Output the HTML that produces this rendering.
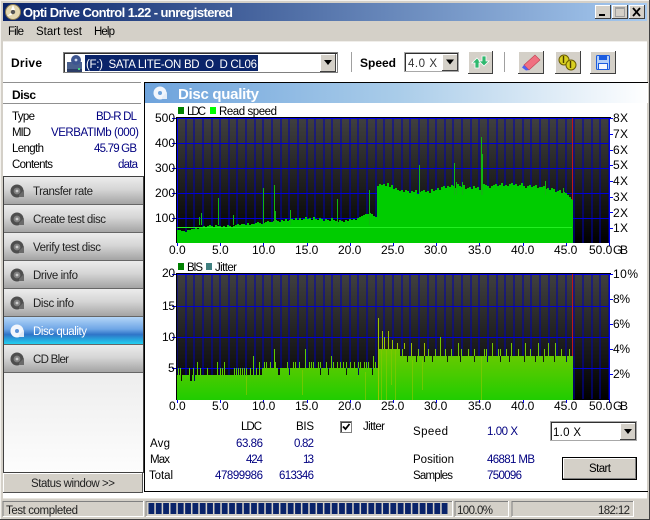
<!DOCTYPE html>
<html><head><meta charset="utf-8"><title>Opti Drive Control</title>
<style>
html,body{margin:0;padding:0;background:#fff}
svg{display:block}
text{font-family:"Liberation Sans",Arial,sans-serif;font-size:11.5px;fill:#000;white-space:pre}
.a text{font-size:12px}
.b{font-weight:bold;font-size:12px}
.n{fill:#000080}
.d{fill:#222}
</style></head><body>
<svg xmlns="http://www.w3.org/2000/svg" width="650" height="520" viewBox="0 0 650 520">
<defs>
<linearGradient id="tb" x1="0" x2="1" y1="0" y2="0"><stop offset="0" stop-color="#0a246a"/><stop offset="1" stop-color="#a6caf0"/></linearGradient>
<linearGradient id="hd" x1="0" x2="1" y1="0" y2="0"><stop offset="0" stop-color="#6ea3dc"/><stop offset=".5" stop-color="#a9cce9"/><stop offset="1" stop-color="#ffffff"/></linearGradient>
<linearGradient id="btn" x1="0" x2="0" y1="0" y2="1"><stop offset="0" stop-color="#ececec"/><stop offset=".45" stop-color="#d6d6d6"/><stop offset="1" stop-color="#a4a4a4"/></linearGradient>
<linearGradient id="act" x1="0" x2="0" y1="0" y2="1"><stop offset="0" stop-color="#b4d6f8"/><stop offset=".45" stop-color="#6ea6e6"/><stop offset=".65" stop-color="#2f74c8"/><stop offset="1" stop-color="#22d0f0"/></linearGradient>
<linearGradient id="fill" x1="0" x2="0" y1="0" y2="1"><stop offset="0" stop-color="#cfcfcf"/><stop offset="1" stop-color="#fdfdfd"/></linearGradient>
<linearGradient id="p1" gradientUnits="userSpaceOnUse" x1="0" x2="0" y1="118" y2="243"><stop offset="0" stop-color="#404040"/><stop offset="1" stop-color="#000"/></linearGradient>
<linearGradient id="p2" gradientUnits="userSpaceOnUse" x1="0" x2="0" y1="274" y2="400"><stop offset="0" stop-color="#404040"/><stop offset="1" stop-color="#000"/></linearGradient>
<linearGradient id="g2" gradientUnits="userSpaceOnUse" x1="0" x2="0" y1="345" y2="400"><stop offset="0" stop-color="#74c800"/><stop offset=".55" stop-color="#48cb00"/><stop offset="1" stop-color="#20cc00"/></linearGradient>
<path id="vg" d="M177 118v125M186 118v125M194 118v125M203 118v125M212 118v125M220 118v125M229 118v125M237 118v125M246 118v125M255 118v125M263 118v125M272 118v125M281 118v125M289 118v125M298 118v125M307 118v125M315 118v125M324 118v125M332 118v125M341 118v125M350 118v125M358 118v125M367 118v125M376 118v125M384 118v125M393 118v125M402 118v125M410 118v125M419 118v125M428 118v125M436 118v125M445 118v125M453 118v125M462 118v125M471 118v125M479 118v125M488 118v125M497 118v125M505 118v125M514 118v125M523 118v125M531 118v125M540 118v125M549 118v125M557 118v125M566 118v125M574 118v125M583 118v125M592 118v125M600 118v125M609 118v125" stroke="#0000b4" stroke-width="1" shape-rendering="crispEdges" fill="none"/>
<g id="di"><circle cx="7" cy="7" r="6.5" fill="#4e4e4e"/><circle cx="7" cy="7" r="3.4" fill="#808080"/><circle cx="7" cy="7" r="1.4" fill="#ccc"/><path d="M9 11l5-5v7h-5z" fill="#6a6a6a"/></g>
</defs>

<!-- window frame -->
<rect width="650" height="520" fill="#d4d0c8"/>
<path d="M0 .5H650M.5 0V520" stroke="#f4f2ee" shape-rendering="crispEdges"/>
<path d="M0 519.5H650M649.5 0V520" stroke="#404040" shape-rendering="crispEdges"/>
<rect x="3" y="3" width="644" height="18" fill="url(#tb)"/>
<circle cx="13" cy="12" r="7.5" fill="#e4d8b0"/><circle cx="13" cy="12" r="7.5" fill="none" stroke="#8a7a50"/><circle cx="13" cy="12" r="2.2" fill="#555"/><path d="M13 5l2 5h-4zM7 16l4-3 1 2z" fill="#fff"/>
<text x="23" y="17" class="b" style="font-size:13px;fill:#fff" textLength="210">Opti Drive Control 1.22 - unregistered</text>

<!-- window buttons -->
<g shape-rendering="crispEdges">
<rect x="595" y="5" width="16" height="14" fill="#d4d0c8"/><path d="M595 18.500H611M610.500 5V19" stroke="#404040"/><path d="M595 5.500H610M595.500 5V18" stroke="#fff"/>
<rect x="599" y="14" width="6" height="2" fill="#000"/>
<rect x="612" y="5" width="16" height="14" fill="#d4d0c8"/><path d="M612 18.500H628M627.500 5V19" stroke="#404040"/><path d="M612 5.500H627M612.500 5V18" stroke="#fff"/>
<rect x="615.500" y="7.500" width="9" height="9" fill="none" stroke="#a0a0a0"/><path d="M616 8.500h8" stroke="#a0a0a0"/>
<rect x="629" y="5" width="16" height="14" fill="#d4d0c8"/><path d="M629 18.500H645M644.500 5V19" stroke="#404040"/><path d="M629 5.500H644M629.500 5V18" stroke="#fff"/>
</g>
<path d="M633 8l7 8M640 8l-7 8" stroke="#000" stroke-width="1.8"/>

<!-- menu -->
<text x="8" y="35" textLength="16">File</text>
<text x="36" y="35" textLength="46">Start test</text>
<text x="94" y="35" textLength="21">Help</text>

<!-- client -->
<rect x="3" y="41" width="644" height="457" fill="#fff"/>
<path d="M3 41.500H647" stroke="#f0eeea" shape-rendering="crispEdges"/>

<!-- toolbar -->
<text x="11" y="67" class="b" textLength="31">Drive</text>
<rect x="63.500" y="52.500" width="274" height="20" fill="#fff" stroke="#808080" shape-rendering="crispEdges"/>
<path d="M64 53.500H337M64.500 53V72" stroke="#303030" shape-rendering="crispEdges"/>
<path d="M67 69h15v-7h-15z" fill="#49608e"/><path d="M67 69h15v3h-15z" fill="#2b3d66"/><circle cx="76" cy="60" r="5" fill="#3d5590"/><circle cx="76" cy="60" r="1.400" fill="#cdd6ea"/><rect x="78" y="68" width="2" height="2" fill="#3dd07a"/>
<rect x="85" y="55" width="173" height="16" fill="#0a246a"/>
<text x="86" y="68" style="fill:#fff" textLength="171">(F:)  SATA LITE-ON BD  O  D CL06</text>
<g shape-rendering="crispEdges">
<rect x="320" y="54" width="16" height="18" fill="#d4d0c8"/><path d="M320 71.500H336M335.500 54V72" stroke="#404040"/><path d="M320 54.500H335M320.500 54V71" stroke="#fff"/>
<path d="M351.500 52V72M504.500 52V72" stroke="#a0a0a0"/>
<rect x="404.500" y="52.500" width="54" height="19" fill="#fff" stroke="#a8a8a8"/><path d="M405 53.500H458M405.500 53V71" stroke="#303030"/>
<rect x="442" y="54" width="16" height="17" fill="#d4d0c8"/><path d="M442 70.500H458M457.500 54V71" stroke="#404040"/><path d="M442 54.500H457M442.500 54V70" stroke="#fff"/>
</g>
<path d="M324 60h8l-4 5z" fill="#000"/><path d="M446 59.500h8l-4 5z" fill="#000"/>
<text x="360" y="67" class="b" textLength="36">Speed</text>
<text x="408" y="67" textLength="29" style="fill:#333">4.0 X</text>
<g shape-rendering="crispEdges">
<rect x="468" y="51" width="25" height="23" fill="#d4d0c8"/><path d="M468 73.500H493M492.500 51V74" stroke="#404040"/><path d="M468 51.500H492M468.500 51V73" stroke="#fff"/>
<rect x="518" y="51" width="26" height="23" fill="#d4d0c8"/><path d="M518 73.500H544M543.500 51V74" stroke="#404040"/><path d="M518 51.500H543M518.500 51V73" stroke="#fff"/>
<rect x="555" y="51" width="26" height="23" fill="#d4d0c8"/><path d="M555 73.500H581M580.500 51V74" stroke="#404040"/><path d="M555 51.500H580M555.500 51V73" stroke="#fff"/>
<rect x="590" y="51" width="26" height="23" fill="#d4d0c8"/><path d="M590 73.500H616M615.500 51V74" stroke="#404040"/><path d="M590 51.500H615M590.500 51V73" stroke="#fff"/>
</g>
<path d="M477 58l5 5h-3v5h-4v-5h-3z" fill="#2fb86e" stroke="#fff" stroke-width=".8"/>
<path d="M484 66l5-5h-3v-5h-4v5h-3z" fill="#2fb86e" stroke="#fff" stroke-width=".8"/>
<path d="M524 65l11-10 5 5-11 10z" fill="#f07080" stroke="#c04050" stroke-width=".6"/><path d="M524 65l5 5-3 .5-4-3z" fill="#5060f0"/>
<circle cx="564" cy="60" r="5" fill="#d8d020" stroke="#6a5c00"/><circle cx="571" cy="65" r="5" fill="#d8d020" stroke="#6a5c00"/><path d="M563.500 56v7M570.500 61v7" stroke="#4a3c00" stroke-width="1.400"/>
<rect x="596.500" y="55.500" width="13" height="14" rx="1" fill="#b4d0f8" stroke="#1c5ce0"/><rect x="599" y="56" width="8" height="4" fill="#1c5ce0"/><rect x="598.500" y="63.500" width="9" height="6" fill="#f4f8ff" stroke="#1c5ce0"/>

<!-- left: disc info -->
<path d="M3 82.500H141M3 103.500H141" stroke="#909090" shape-rendering="crispEdges"/>
<text x="12" y="99" class="b" textLength="24">Disc</text>
<text x="12" y="120" textLength="23">Type</text>
<text x="12" y="136" textLength="19">MID</text>
<text x="12" y="152" textLength="32">Length</text>
<text x="12" y="168" textLength="41">Contents</text>
<text x="96" y="120" class="n" textLength="41">BD-R DL</text>
<text x="51" y="136" class="n" textLength="88">VERBATIMb (000)</text>
<text x="94" y="152" class="n" textLength="43">45.79 GB</text>
<text x="118" y="168" class="n" textLength="20">data</text>

<!-- left: buttons -->
<rect x="3.500" y="176.500" width="140" height="296" fill="url(#fill)" stroke="#404040" shape-rendering="crispEdges"/>
<g shape-rendering="crispEdges">
<rect x="4" y="177" width="139" height="27" fill="url(#btn)"/><path d="M4 204.500H143" stroke="#666"/>
<rect x="4" y="205" width="139" height="27" fill="url(#btn)"/><path d="M4 232.500H143" stroke="#666"/>
<rect x="4" y="233" width="139" height="27" fill="url(#btn)"/><path d="M4 260.500H143" stroke="#666"/>
<rect x="4" y="261" width="139" height="27" fill="url(#btn)"/><path d="M4 288.500H143" stroke="#666"/>
<rect x="4" y="289" width="139" height="27" fill="url(#btn)"/><path d="M4 316.500H143" stroke="#666"/>
<rect x="4" y="317" width="139" height="27" fill="url(#act)"/><path d="M4 344.500H143" stroke="#666"/>
<rect x="4" y="345" width="139" height="27" fill="url(#btn)"/><path d="M4 372.500H143" stroke="#666"/>
</g>
<use href="#di" x="10" y="184"/><use href="#di" x="10" y="212"/><use href="#di" x="10" y="240"/><use href="#di" x="10" y="268"/><use href="#di" x="10" y="296"/><use href="#di" x="10" y="352"/>
<circle cx="17" cy="331" r="6.500" fill="#f2f6fc"/><circle cx="17" cy="331" r="2" fill="#5b93d8"/><path d="M19 335l5-5v7h-5z" fill="#dfe9f6"/>
<text x="33" y="195" class="d" textLength="60">Transfer rate</text>
<text x="33" y="223" class="d" textLength="73">Create test disc</text>
<text x="33" y="251" class="d" textLength="68">Verify test disc</text>
<text x="33" y="279" class="d" textLength="45">Drive info</text>
<text x="33" y="307" class="d" textLength="41">Disc info</text>
<text x="33" y="335" style="fill:#fff" textLength="54">Disc quality</text>
<text x="33" y="363" class="d" textLength="36">CD Bler</text>
<g shape-rendering="crispEdges">
<rect x="3" y="473" width="140" height="20" fill="#d4d0c8"/><path d="M3 473.500H143M3.500 473V493" stroke="#fff"/><path d="M3 492.500H143M142.500 473V493" stroke="#505050"/>
</g>
<text x="31" y="487" class="d" textLength="84">Status window &gt;&gt;</text>

<!-- right panel -->
<path d="M144.500 82V491.500H648M144 82.500H648" stroke="#000" fill="none" shape-rendering="crispEdges"/>
<rect x="145" y="83" width="503" height="20" fill="url(#hd)"/>
<circle cx="160" cy="93" r="6.500" fill="#f2f6fc"/><circle cx="160" cy="93" r="2" fill="#6ea3dc"/><path d="M162 97l5-5v7h-5z" fill="#e4edf8"/>
<text x="178" y="99" class="b" style="font-size:15px;fill:#fff" textLength="81">Disc quality</text>

<!-- legend 1 -->
<rect x="178" y="107" width="6" height="7" fill="#008000"/><text x="187" y="115" textLength="19">LDC</text>
<rect x="210" y="107" width="6" height="7" fill="#00ff00"/><text x="219" y="115" textLength="58">Read speed</text>

<!-- chart 1 -->
<rect x="177" y="118" width="433" height="125" fill="url(#p1)"/>
<use href="#vg"/>
<path d="M177 118.500H610M177 143.500H610M177 168.500H610M177 193.500H610M177 218.500H610" stroke="#0000d8" shape-rendering="crispEdges"/>
<path d="M176 117.500H611M176.500 117V243" stroke="#000" shape-rendering="crispEdges"/>
<path d="M177 118.500H610M177.500 118V243M609.500 118V244" stroke="#0000f0" shape-rendering="crispEdges"/>
<path d="M172 118.500h4M172 143.500h4M172 168.500h4M172 193.500h4M172 218.500h4M610 118.500h3M610 134.500h3M610 150.500h3M610 165.500h3M610 181.500h3M610 197.500h3M610 212.500h3M610 228.500h3M177.500 243v3M220.500 243v3M263.500 243v3M307.500 243v3M350.500 243v3M393.500 243v3M436.500 243v3M479.500 243v3M523.500 243v3M566.500 243v3M609.500 243v3" stroke="#0000f0" shape-rendering="crispEdges"/>
<path fill="#00cc00" d="M177 243V230h2V230h2V231h2V231h2V232h2V230h2V230h2V229h2V229h2V228h2V229h2V228h2V227h2V226h2V227h2V226h2V225h2V226h2V227h2V225h2V226h2V226h2V227h2V226h2V227h2V225h2V226h2V227h2V226h2V225h2V224h2V225h2V224h2V224h2V225h2V223h2V225h2V224h2V224h2V223h2V222h2V223h2V224h2V223h2V222h2V221h2V222h2V222h2V221h2V220h2V221h2V222h2V220h2V221h2V219h2V221h2V220h2V219h2V220h2V218h2V220h2V218h2V220h2V219h2V217h2V219h2V218h2V220h2V217h2V219h2V220h2V218h2V219h2V221h2V219h2V220h2V221h2V218h2V220h2V221h2V222h2V220h2V221h2V222h2V220h2V221h2V219h2V220h2V219h2V220h2V218h2V217h2V216h2V215h2V214h2V214h2V213h2V214h2V216h2V217h2V186h2V184h2V185h2V184h2V186h2V183h2V187h2V185h2V189h2V188h2V190h2V191h2V190h2V192h2V190h2V191h2V193h2V191h2V192h2V190h2V194h2V192h2V191h2V190h2V192h2V191h2V193h2V189h2V191h2V190h2V188h2V190h2V187h2V186h2V188h2V186h2V187h2V185h2V186h2V188h2V184h2V186h2V187h2V185h2V189h2V188h2V187h2V189h2V186h2V188h2V187h2V190h2V187h2V184h2V185h2V186h2V188h2V186h2V185h2V184h2V186h2V185h2V183h2V186h2V185h2V186h2V184h2V183h2V185h2V184h2V186h2V185h2V183h2V186h2V188h2V186h2V185h2V187h2V186h2V185h2V188h2V187h2V187h2V186h2V189h2V188h2V190h2V188h2V189h2V192h2V191h2V190h2V193h2V192h2V193h2V195h2V197h2V199h2V243z"/>
<path d="M199.500 225V217M201.500 225V213M218.500 225V198M233.500 225V215M263.500 225V188M274.500 225V185M275.500 225V211M290.500 225V210M337.500 225V199M369.500 225V190M419.500 195V165M454.500 195V163M456.500 195V182M462.500 195V182M481.500 195V137M482.500 195V154M545.500 195V181M563.500 195V188" stroke="#10b810" shape-rendering="crispEdges"/>
<path d="M177 227.500H572" stroke="#22ee22" shape-rendering="crispEdges"/>
<path d="M572.500 118V200" stroke="#c01818" shape-rendering="crispEdges"/>

<g class="a">
<text x="155" y="122" textLength="20">500</text><text x="155" y="147" textLength="20">400</text><text x="155" y="172" textLength="20">300</text><text x="155" y="197" textLength="20">200</text><text x="155" y="222" textLength="20">100</text>
<text x="613" y="122" textLength="15">8 X</text><text x="613" y="138" textLength="15">7 X</text><text x="613" y="154" textLength="15">6 X</text><text x="613" y="169" textLength="15">5 X</text><text x="613" y="185" textLength="15">4 X</text><text x="613" y="201" textLength="15">3 X</text><text x="613" y="217" textLength="15">2 X</text><text x="613" y="232" textLength="15">1 X</text>
<text x="169" y="254">0.0</text><text x="212" y="254">5.0</text><text x="252" y="254">10.0</text><text x="295" y="254">15.0</text><text x="338" y="254">20.0</text><text x="381" y="254">25.0</text><text x="424" y="254">30.0</text><text x="468" y="254">35.0</text><text x="511" y="254">40.0</text><text x="554" y="254">45.0</text><text x="589" y="254">50.0</text><text x="613" y="254" textLength="15">GB</text>
</g>

<!-- legend 2 -->
<rect x="178" y="263" width="6" height="7" fill="#008000"/><text x="187" y="271" textLength="16">BIS</text>
<rect x="206" y="263" width="6" height="7" fill="#408080"/><text x="215" y="271" textLength="22">Jitter</text>

<!-- chart 2 -->
<rect x="177" y="274" width="433" height="126" fill="url(#p2)"/>
<use href="#vg" y="156"/>
<path d="M177 306.500H610M177 337.500H610M177 368.500H610" stroke="#0000d8" shape-rendering="crispEdges"/>
<path d="M176 273.500H611M176.500 273V400" stroke="#000" shape-rendering="crispEdges"/>
<path d="M177 274.500H610M609.500 274V400" stroke="#0000f0" shape-rendering="crispEdges"/>
<path d="M172 274.500h4M172 306.500h4M172 337.500h4M172 368.500h4M610 274.500h3M610 299.500h3M610 324.500h3M610 349.500h3M610 374.500h3M177.500 400v3M220.500 400v3M263.500 400v3M307.500 400v3M350.500 400v3M393.500 400v3M436.500 400v3M479.500 400v3M523.500 400v3M566.500 400v3M609.500 400v3" stroke="#0000f0" shape-rendering="crispEdges"/>
<path fill="url(#g2)" shape-rendering="crispEdges" d="M177 400V375H181V381H182V375H190V381H192V375H194V381H195V375H262V368H278V375H280V368H289V375H290V368H320V375H321V368H328V375H329V368H346V375H347V368H358V375H359V368H372V375H373V368H378V349H400V356H407V362H408V356H416V362H417V356H424V362H425V356H432V362H433V356H447V362H448V356H460V362H461V356H474V362H475V356H487V362H488V356H500V362H501V356H509V362H510V356H524V362H525V356H535V362H536V356H543V362H544V356H554V362H555V356H566V362H567V356H573V400z"/>
<path stroke="#5dcc00" shape-rendering="crispEdges" d="M178.500 375V368M180.500 375V368M189.500 375V368M193.500 375V368M197.500 375V362M200.500 375V368M207.500 375V368M217.500 375V362M220.500 375V368M222.500 375V368M224.500 375V362M234.500 375V368M236.500 375V368M238.500 375V368M240.500 375V368M242.500 375V368M244.500 375V368M246.500 375V368M250.500 375V368M253.500 375V356M256.500 375V368M259.500 375V362M264.500 368V362M266.500 368V362M270.500 368V362M274.500 368V349M275.500 368V362M287.500 368V362M293.500 368V362M295.500 368V362M299.500 368V362M305.500 368V349M309.500 368V362M311.500 368V362M313.500 368V362M318.500 368V362M320.500 368V362M326.500 368V362M331.500 368V356M333.500 368V362M337.500 368V362M340.500 368V362M343.500 368V362M346.500 368V362M350.500 368V362M354.500 368V362M358.500 368V362M360.500 368V362M364.500 368V362M366.500 368V362M368.500 368V362M373.500 368V356M375.500 368V362"/>
<path stroke="#72c800" shape-rendering="crispEdges" d="M402.500 356V349M411.500 356V343M418.500 356V349M428.500 356V349M435.500 356V349M440.500 356V343M445.500 356V349M451.500 356V349M458.500 356V343M461.500 356V349M468.500 356V349M474.500 356V349M484.500 356V349M486.500 356V349M492.500 356V343M498.500 356V349M500.500 356V349M506.500 356V349M511.500 356V343M518.500 356V349M525.500 356V343M530.500 356V349M538.500 356V343M544.500 356V349M548.500 356V343M555.500 356V343M561.500 356V349M569.500 356V349M440.500 343V337"/>
<path stroke="#9ac400" shape-rendering="crispEdges" d="M378.500 400V318M382.500 349V331M384.500 349V337M388.500 349V331M392.500 349V340M397.500 349V343M404.500 349V343M411.500 356V343M424.500 356V343"/>
<path stroke="#88c800" stroke-opacity=".7" shape-rendering="crispEdges" d="M381.500 400V350M386.500 400V350M391.500 385V350M395.500 400V350M412.500 400V360M481.500 400V357M422.500 390V360M365.500 400V372M302.500 395V370M246.500 395V376"/>
<path d="M572.500 274V356" stroke="#c01818" shape-rendering="crispEdges"/>

<g class="a">
<text x="162" y="277" textLength="13">20</text><text x="162" y="310" textLength="13">15</text><text x="162" y="341" textLength="13">10</text><text x="168" y="372">5</text>
<text x="613" y="278" textLength="25">10%</text><text x="613" y="303" textLength="17">8%</text><text x="613" y="328" textLength="17">6%</text><text x="613" y="353" textLength="17">4%</text><text x="613" y="378" textLength="17">2%</text>
<text x="169" y="410">0.0</text><text x="212" y="410">5.0</text><text x="252" y="410">10.0</text><text x="295" y="410">15.0</text><text x="338" y="410">20.0</text><text x="381" y="410">25.0</text><text x="424" y="410">30.0</text><text x="468" y="410">35.0</text><text x="511" y="410">40.0</text><text x="554" y="410">45.0</text><text x="589" y="410">50.0</text><text x="613" y="410" textLength="15">GB</text>
</g>

<!-- stats -->
<text x="241" y="430" textLength="21">LDC</text><text x="296" y="430" textLength="18">BIS</text>
<text x="150" y="447" textLength="20">Avg</text><text x="150" y="463" textLength="20">Max</text><text x="149" y="479" textLength="24">Total</text>
<text x="236" y="447" class="n" textLength="27">63.86</text><text x="246" y="463" class="n" textLength="17">424</text><text x="215" y="479" class="n" textLength="48">47899986</text>
<text x="294" y="447" class="n" textLength="20">0.82</text><text x="303" y="463" class="n" textLength="11">13</text><text x="279" y="479" class="n" textLength="35">613346</text>

<g shape-rendering="crispEdges"><rect x="340.500" y="421.500" width="11" height="11" fill="#fff" stroke="#808080"/><path d="M341 422.500h10M341.500 422v10" stroke="#404040"/></g>
<path d="M343 426.500l2.500 2.500 4-5" stroke="#000" stroke-width="1.800" fill="none"/>
<text x="363" y="430" textLength="22">Jitter</text>
<text x="413" y="435" textLength="35">Speed</text><text x="487" y="435" class="n" textLength="31">1.00 X</text>
<text x="413" y="463" textLength="41">Position</text><text x="487" y="463" class="n" textLength="48">46881 MB</text>
<text x="413" y="479" textLength="40">Samples</text><text x="487" y="479" class="n" textLength="35">750096</text>

<g shape-rendering="crispEdges">
<rect x="550.500" y="421.500" width="86" height="19" fill="#fff" stroke="#a8a8a8"/><path d="M551 422.500H636M551.500 422V440" stroke="#303030"/>
<rect x="620" y="423" width="16" height="17" fill="#d4d0c8"/><path d="M620 439.500H636M635.500 423V440" stroke="#404040"/><path d="M620 423.500H635M620.500 423V439" stroke="#fff"/>
<rect x="562.500" y="457.500" width="74" height="22" fill="#d4d0c8" stroke="#000"/><path d="M563 458.500H636M563.500 458V479" stroke="#fff"/><path d="M563 478.500H636M635.500 458V479" stroke="#808080"/>
</g>
<path d="M624 429h8l-4 5z" fill="#000"/>
<text x="553" y="436" textLength="28">1.0 X</text>
<text x="589" y="472" textLength="22">Start</text>

<!-- status bar -->
<g shape-rendering="crispEdges" fill="none">
<path d="M3 498.500H647" stroke="#e8e6e0"/>
<path d="M3 516.500V501.500H143" stroke="#808080"/><path d="M3 516.500H143.500V501" stroke="#fff"/>
<path d="M146 516.500V501.500H452" stroke="#808080"/><path d="M146 516.500H452.500V501" stroke="#fff"/>
<path d="M455 516.500V501.500H508" stroke="#808080"/><path d="M455 516.500H508.500V501" stroke="#fff"/>
<path d="M512 516.500V501.500H633" stroke="#808080"/><path d="M512 516.500H633.500V501" stroke="#fff"/>
</g>
<path d="M148.500 508.500H449" stroke="#0a246a" stroke-width="11" stroke-dasharray="5.800 1.530"/>
<text x="6" y="514" class="d" textLength="72">Test completed</text>
<text x="457" y="514" class="d" textLength="36">100.0%</text>
<text x="598" y="514" class="d" textLength="32">182:12</text>
</svg>
</body></html>
